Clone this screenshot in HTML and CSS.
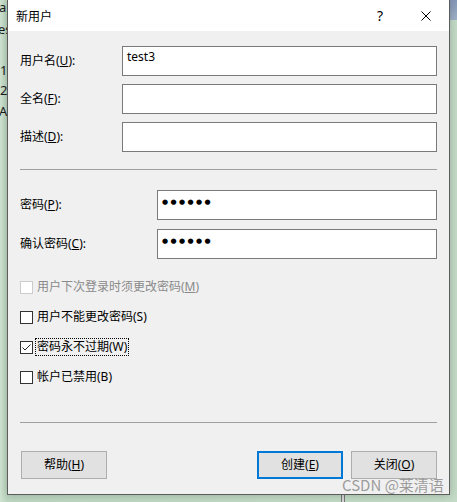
FILE: index.html
```html
<!DOCTYPE html>
<html lang="zh-CN">
<head>
<meta charset="utf-8">
<title>新用户</title>
<link rel="stylesheet" href="styles.css">
</head>
<body>
<div class="desktop">
  <div class="bg-text">
    <span class="l1">a</span>
    <span class="l2">es</span>
    <span class="l3">1</span>
    <span class="l4">2</span>
    <span class="l5">A</span>
  </div>
  <div class="bg-blue"></div>
  <div class="bg-bar"></div>

  <div class="dialog">
    <div class="titlebar">
      <span class="title">新用户</span>
      <span class="tb-btn help">?</span>
      <span class="tb-btn close">
        <svg width="10" height="10" viewBox="0 0 10 10"><path d="M0.5 0.5 L9.5 9.5 M9.5 0.5 L0.5 9.5" stroke="#000" stroke-width="1" fill="none"/></svg>
      </span>
    </div>
    <div class="body">
      <div class="group g1">
        <div class="row"><span class="label">用户名(<u>U</u>):</span><div class="input">test3</div></div>
        <div class="row"><span class="label">全名(<u>F</u>):</span><div class="input"></div></div>
        <div class="row"><span class="label">描述(<u>D</u>):</span><div class="input"></div></div>
      </div>
      <div class="sep sep1"></div>
      <div class="group g2">
        <div class="row"><span class="label">密码(<u>P</u>):</span><div class="input pw">●●●●●●</div></div>
        <div class="row"><span class="label">确认密码(<u>C</u>):</span><div class="input pw">●●●●●●</div></div>
      </div>
      <div class="checks">
        <div class="check disabled"><span class="box"></span><span class="ctext">用户下次登录时须更改密码(<u>M</u>)</span></div>
        <div class="check"><span class="box"></span><span class="ctext">用户不能更改密码(S)</span></div>
        <div class="check"><span class="box"><svg width="11" height="11" viewBox="0 0 11 11"><polyline points="1.5,5.5 4,8 9.5,2.5" fill="none" stroke="#2b2b2b" stroke-width="1"/></svg></span><span class="ctext focus">密码永不过期(W)</span></div>
        <div class="check"><span class="box"></span><span class="ctext">帐户已禁用(B)</span></div>
      </div>
      <div class="sep sep2"></div>
      <div class="buttons">
        <div class="btn help-btn">帮助(<u>H</u>)</div>
        <div class="spacer"></div>
        <div class="btn default">创建(<u>E</u>)</div>
        <div class="btn">关闭(<u>O</u>)</div>
      </div>
    </div>
  </div>
  <div class="watermark">CSDN @莱清语</div>
</div>
</body>
</html>
```
FILE: styles.css
```css
* { box-sizing: border-box; }
html, body { margin: 0; padding: 0; }
body {
  width: 457px;
  height: 502px;
  overflow: hidden;
  background: #c3dbc6;
  font-family: "Noto Sans", "Noto Sans CJK SC", sans-serif;
  font-size: 12px;
  color: #000;
}
.desktop {
  position: relative;
  width: 457px;
  height: 502px;
  background: linear-gradient(90deg, #cfe3d1 0px, #bcd6c0 7px, #c3dbc6 460px);
}
.bg-text {
  position: absolute;
  left: -1px;
  top: 0;
  font-size: 13px;
  color: #1a1a1a;
  font-family: "Noto Sans", sans-serif;
}
.bg-text span { position: absolute; left: 0; line-height: 16px; white-space: nowrap; }
.bg-text .l1 { top: -1px; }
.bg-text .l2 { top: 21px; left: -1px; }
.bg-text .l3 { top: 62px; left: 1px; }
.bg-text .l4 { top: 82px; left: 1px; }
.bg-text .l5 { top: 103px; left: 0; }
.bg-blue {
  position: absolute;
  left: 450px;
  top: 0;
  width: 7px;
  height: 20px;
  background: linear-gradient(180deg, #8598b7, #9fb1c8);
}
.bg-bar {
  position: absolute;
  left: 341px;
  top: 494px;
  width: 4px;
  height: 8px;
  background: #d6d6d6;
  border-left: 1px solid #777;
  border-right: 1px solid #777;
}
.dialog {
  position: absolute;
  left: 7px;
  top: -1px;
  width: 443px;
  border: 1px solid #5c5c5c;
  background: #f0f0f0;
  box-shadow: 0 0 8px rgba(0, 0, 0, 0.22);
}
.titlebar {
  height: 31px;
  background: #fff;
  display: flex;
  align-items: center;
}
.title {
  flex: 1;
  padding-left: 8px;
  line-height: 16px;
  font-family: "Noto Sans CJK SC", sans-serif;
}
.tb-btn {
  width: 46px;
  height: 31px;
  display: flex;
  align-items: center;
  justify-content: center;
}
.help { font-size: 14px; font-family: "Noto Sans", sans-serif; padding-top: 0; }
.body {
  padding: 15px 12px 15px 12px;
}
.group { display: flex; flex-direction: column; }
.g1 { gap: 8px; }
.g2 { gap: 9px; margin-top: 20px; }
.row { display: flex; align-items: center; height: 30px; }
.label { line-height: 16px; white-space: nowrap; }
.g1 .label { width: 102px; }
.g2 .label { width: 137px; }
.input {
  flex: 1;
  height: 30px;
  background: #fff;
  border: 1px solid #7a7a7a;
  padding: 2px 4px 0 4px;
  line-height: 16px;
}
.input.pw {
  font-family: "DejaVu Sans", sans-serif;
  font-size: 7px;
  letter-spacing: 2.4px;
  padding-top: 3px;
  padding-left: 4px;
}
.sep { height: 1px; background: #a0a0a0; }
.sep1 { margin-top: 17px; }
.checks {
  margin-top: 19px;
  display: flex;
  flex-direction: column;
  gap: 12px;
}
.check { display: flex; align-items: center; height: 18px; }
.box {
  width: 13px;
  height: 13px;
  border: 1px solid #333;
  background: #fff;
  display: flex;
  align-items: center;
  justify-content: center;
  flex: none;
}
.ctext {
  margin-left: 2px;
  padding: 0 1px;
  line-height: 16px;
  border: 1px solid transparent;
  white-space: nowrap;
}
.ctext.focus { border: 1px dotted #000; }
.check.disabled .box { border-color: #cccccc; }
.check.disabled .ctext { color: #8a8a8a; }
.sep2 { margin-top: 36px; }
.buttons {
  margin-top: 28px;
  display: flex;
  gap: 8px;
}
.spacer { flex: 1; }
.btn {
  width: 86px;
  height: 28px;
  background: #e1e1e1;
  border: 1px solid #adadad;
  display: flex;
  align-items: center;
  justify-content: center;
  line-height: 16px;
}
.help-btn { margin-left: 1px; }
.btn.default { border: 2px solid #0078d7; }
.watermark {
  position: absolute;
  left: 342px;
  top: 474px;
  font-family: "Noto Sans CJK SC", sans-serif;
  font-size: 15px;
  line-height: 22px;
  color: rgba(140, 140, 140, 0.85);
  white-space: nowrap;
}
```
